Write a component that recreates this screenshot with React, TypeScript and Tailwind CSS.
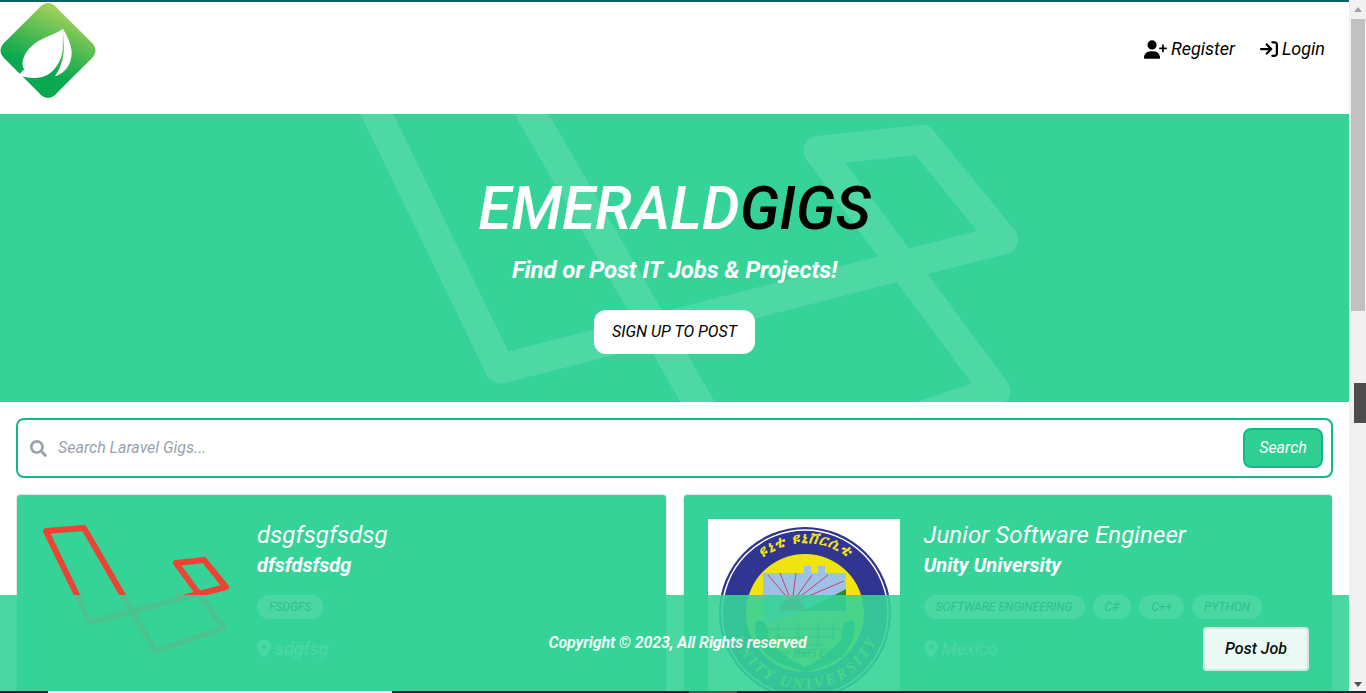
import React from 'react';
import { FaSearch } from 'react-icons/fa';
import { FaUserPlus, FaArrowRightToBracket, FaLocationDot } from 'react-icons/fa6';

const LaravelLogo: React.FC<{ className: string; color: string; weight: number }> = ({ className, color, weight }) => (
  <svg className={className} viewBox="41 519 192 192" fill="none">
    <path
      d="M46 531 L84 528 L155 651 L224 628 L176 563 L204 560 L226 587 L90 622 Z"
      stroke={color}
      strokeWidth={weight}
      strokeLinejoin="round"
    />
  </svg>
);

const LeafLogo = () => (
  <svg className="w-24 h-24 shrink-0" viewBox="0 0 96 97">
    <defs>
      <linearGradient id="leafbg" x1="62" y1="6" x2="36" y2="66" gradientUnits="userSpaceOnUse">
        <stop offset="0" stopColor="#a6d35a" />
        <stop offset="0.6" stopColor="#45b850" />
        <stop offset="1" stopColor="#0aa94f" />
      </linearGradient>
    </defs>
    <path
      d="M38 7 Q48 -5 58 7 L90 39 Q102 49 90 59 L58 91 Q48 103 38 91 L6 59 Q-6 49 6 39 Z"
      fill="url(#leafbg)"
    />
    <path d="M63 27 C55 34 40 35 30 46 C23 53 20 63 24 68 L18 74 C27 77 40 79 50 72 C58 66 63 55 63 46 Z" fill="#fff" />
    <path d="M63 27 C70 38 74 50 71 58 C69 67 62 73 55 75 C60 68 64 58 64 46 Z" fill="#fff" />
  </svg>
);

const UnityLogo = () => (
  <svg className="w-48 h-48 shrink-0 bg-white" viewBox="0 0 192 192">
    <defs>
      <path id="ringTop" d="M27 94 A70 70 0 0 1 167 94" />
      <path id="ringBottom" d="M21 94 A76 76 0 0 0 173 94" />
      <clipPath id="shield">
        <path d="M55 54 H96 V47 H103 V54 H110 V47 H117 V54 H138 V110 L97 142 L55 110 Z" />
      </clipPath>
    </defs>
    <circle cx="97" cy="94" r="86" fill="#2f3590" />
    <circle cx="97" cy="94" r="83" fill="none" stroke="#fff" strokeWidth="1.5" />
    <text fontSize="15" fontWeight="700" fill="#f4e514" fontFamily="'DejaVu Sans','Noto Sans',sans-serif" letterSpacing="1">
      <textPath href="#ringTop" startOffset="50%" textAnchor="middle">ዩኒቲ ዩኒቨርሲቲ</textPath>
    </text>
    <circle cx="97" cy="94" r="59" fill="#f0e310" />
    <g clipPath="url(#shield)">
      <rect x="55" y="47" width="83" height="60" fill="#9cc3e6" />
      <path d="M84 84 L60 56 M84 84 L72 54 M84 84 L88 54 M84 84 L104 56 M84 84 L120 56 M84 84 L136 62" stroke="#d33a6a" strokeWidth="1" />
      <circle cx="84" cy="92" r="13" fill="#d33a6a" />
      <path d="M138 70 L96 92 H138 Z" fill="#2e8b2f" />
      <rect x="55" y="92" width="83" height="60" fill="#e8dc3a" />
      <path d="M55 92 L96 92 L55 105 Z" fill="#9cc3e6" />
      <path d="M55 110 H138 M55 118 H138 M55 126 H138 M55 134 H138 M70 102 V142 M90 102 V142 M110 102 V142 M125 102 V142" stroke="#4b6a3a" strokeWidth="1" />
    </g>
    <path d="M48 102 C56 100 62 108 60 118 C68 132 84 142 97 148 C110 142 126 132 134 118 C132 108 138 100 146 102 C150 122 136 140 118 146 L97 154 L76 146 C58 140 44 122 48 102 Z" fill="#1f7f3c" />
    <text x="97" y="138" textAnchor="middle" fontSize="12" fill="#333" fontFamily="'Liberation Serif',serif">Since 1985 Eth.c.</text>
    <text fontSize="15" fontWeight="700" fill="#f4e514" fontFamily="'Liberation Serif',serif" letterSpacing="3">
      <textPath href="#ringBottom" startOffset="50%" textAnchor="middle">UNITY UNIVERSITY</textPath>
    </text>
  </svg>
);

const GigCard: React.FC<{
  logo: React.ReactNode;
  title: string;
  company: string;
  tags: string[];
  location: string;
}> = ({ logo, title, company, tags, location }) => (
  <div className="flex bg-[#36d399] border border-gray-200 rounded p-6 gap-6 h-[300px]">
    {logo}
    <div>
      <h3 className="text-2xl tracking-[0.08px]">{title}</h3>
      <div className="text-xl font-bold">{company}</div>
      <ul className="flex gap-2 mt-4">
        {tags.map((t) => (
          <li key={t} className="bg-white text-black rounded-full px-3 py-1 text-xs">{t}</li>
        ))}
      </ul>
      <div className="flex items-center gap-1 text-lg mt-4">
        <FaLocationDot className="w-[14px] h-[18px]" />
        <span>{location}</span>
      </div>
    </div>
  </div>
);

export default function App() {
  return (
    <div className="relative flex h-[693px] overflow-hidden bg-white italic text-white font-[family-name:Roboto]">
      <main className="w-[1349px] shrink-0">
        <div className="h-0.5 bg-[#0b5f66]" />

        <nav className="flex justify-between items-start h-[112px] text-black text-lg">
          <LeafLogo />
          <ul className="flex gap-[25px] mt-[33px] mr-6">
            <li className="flex items-center gap-1">
              <FaUserPlus className="text-[23px]" />
              <span>Register</span>
            </li>
            <li className="flex items-center gap-1">
              <FaArrowRightToBracket className="text-lg" />
              <span>Login</span>
            </li>
          </ul>
        </nav>

        <section className="relative h-[288px] bg-[#36d399] overflow-hidden flex flex-col items-center">
          <LaravelLogo className="absolute left-[319px] top-[-126px] w-[710px] h-[710px] opacity-[0.115]" color="#ffffff" weight={8} />
          <h1 className="relative text-6xl font-medium mt-[65px] leading-[60px]">
            EMERALD<span className="text-black">GIGS</span>
          </h1>
          <p className="relative text-2xl font-bold tracking-[-0.15px] mt-[15px] leading-8">Find or Post IT Jobs &amp; Projects!</p>
          <button className="relative bg-white text-black rounded-xl h-11 w-[161px] mt-[24px] italic">SIGN UP TO POST</button>
        </section>

        <div className="relative mx-4 mt-4 h-[60px] border-2 border-[#14b886] rounded-lg flex items-center">
          <FaSearch className="ml-3 text-gray-400 text-[17px] shrink-0" />
          <input
            className="flex-1 pl-[11px] italic text-black placeholder:text-gray-400 outline-none"
            placeholder="Search Laravel Gigs..."
          />
          <button className="w-20 h-10 mr-2 rounded-lg bg-[#30d095] border-2 border-[#14b886] text-white italic">Search</button>
        </div>

        <div className="grid grid-cols-2 gap-4 px-4 mt-4">
          <GigCard
            logo={<LaravelLogo className="w-48 h-48 shrink-0" color="#ef4232" weight={6} />}
            title="dsgfsgfsdsg"
            company="dfsfdsfsdg"
            tags={['FSDGFS']}
            location="sdgfsg"
          />
          <GigCard
            logo={<UnityLogo />}
            title="Junior Software Engineer"
            company="Unity University"
            tags={['SOFTWARE ENGINEERING', 'C#', 'C++', 'PYTHON']}
            location="Mexico"
          />
        </div>
      </main>

      {/* scrollbar */}
      <div className="w-[17px] shrink-0 bg-[#f1f1f1] flex flex-col items-center">
        <div className="h-[19px] pt-[7px]">
          <div className="w-0 h-0 border-x-4 border-x-transparent border-b-[5px] border-b-[#a3a3a3]" />
        </div>
        <div className="w-[14px] h-[292px] bg-[#c1c1c1]" />
        <div className="mt-auto mb-[6px] w-0 h-0 border-x-4 border-x-transparent border-t-[5px] border-t-[#505050]" />
      </div>
      <div className="absolute left-[1354px] top-[383px] w-3 h-10 bg-[#4d4d4d]" />

      {/* fixed footer */}
      <footer className="absolute left-0 bottom-0.5 w-[1349px] h-24 bg-[#36d399] opacity-90 flex items-center justify-center font-bold tracking-[-0.15px]">
        <p className="ml-[6px]">Copyright © 2023, All Rights reserved</p>
        <button className="absolute right-10 top-8 w-[106px] h-11 bg-white border-2 border-gray-200 rounded text-black italic font-medium tracking-normal">Post Job</button>
      </footer>

      {/* strip of the window behind */}
      <div className="absolute left-0 bottom-0 w-full h-0.5 bg-[#1b2630] flex">
        <div className="ml-12 w-[344px] bg-white" />
        <div className="ml-[297px] w-12 bg-[#555]" />
      </div>
    </div>
  );
}
